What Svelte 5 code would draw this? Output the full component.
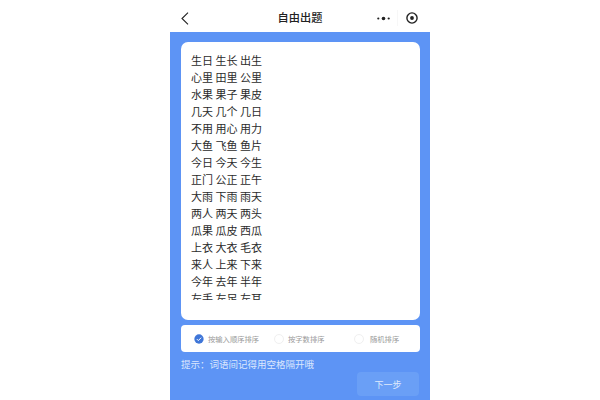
<script>
  const lines = [
    '生日 生长 出生', '心里 田里 公里', '水果 果子 果皮', '几天 几个 几日', '不用 用心 用力',
    '大鱼 飞鱼 鱼片', '今日 今天 今生', '正门 公正 正午', '大雨 下雨 雨天', '两人 两天 两头',
    '瓜果 瓜皮 西瓜', '上衣 大衣 毛衣', '来人 上来 下来', '今年 去年 半年', '左手 左足 左耳'
  ];
  const options = [
    { label: '按输入顺序排序', checked: true },
    { label: '按字数排序', checked: false },
    { label: '随机排序', checked: false }
  ];
</script>

<div class="page">
  <div class="phone">
    <header class="topbar">
      <svg class="back" viewBox="0 0 8 13" fill="none" stroke="#222" stroke-width="1.1">
        <path d="M7 .7 1 6.5l6 5.8" />
      </svg>
      <div class="title">自由出题</div>
      <div class="capsule">
        <svg class="more" viewBox="0 0 13 5" fill="#222">
          <circle cx="1.3" cy="2.5" r="1.1" />
          <circle cx="6.5" cy="2.5" r="1.8" />
          <circle cx="11.7" cy="2.5" r="1.1" />
        </svg>
        <span class="divider"></span>
        <svg class="target" viewBox="0 0 12 12">
          <circle cx="6" cy="6" r="5.1" fill="none" stroke="#222" stroke-width="1.4" />
          <circle cx="6" cy="6" r="1.9" fill="#222" />
        </svg>
      </div>
    </header>

    <main class="content">
      <section class="card">
        <div class="words">
          {#each lines as line}
            <div class="line">{line}</div>
          {/each}
        </div>
      </section>

      <section class="options">
        {#each options as opt}
          <div class="option">
            {#if opt.checked}
              <svg class="radio" viewBox="0 0 12 12">
                <circle cx="6" cy="6" r="5.6" fill="#3f76d8" />
                <path d="M3.4 6.1 5.2 7.9 8.6 4.4" fill="none" stroke="#fff" stroke-width="1.2" />
              </svg>
            {:else}
              <span class="radio empty"></span>
            {/if}
            <span class="label">{opt.label}</span>
          </div>
        {/each}
      </section>

      <div class="hint">提示：词语间记得用空格隔开哦</div>

      <div class="actions">
        <button class="next">下一步</button>
      </div>
    </main>
  </div>
</div>

<style>
  :global(body) {
    margin: 0;
    background: #fff;
  }

  .page {
    width: 600px;
    height: 400px;
    display: flex;
    justify-content: center;
    overflow: hidden;
    font-family: "Noto Sans CJK SC", "Liberation Sans", sans-serif;
  }

  .phone {
    width: 260px;
    height: 400px;
    display: flex;
    flex-direction: column;
  }

  .topbar {
    height: 32px;
    flex: none;
    box-sizing: border-box;
    display: flex;
    align-items: center;
    justify-content: space-between;
    padding: 4px 12px 0 11px;
    background: #fff;
    position: relative;
  }

  .back {
    width: 8px;
    height: 13px;
  }

  .title {
    position: absolute;
    left: 0;
    right: 0;
    top: 0;
    line-height: 35px;
    text-align: center;
    font-size: 11.2px;
    font-weight: 500;
    color: #222;
    pointer-events: none;
  }

  .capsule {
    display: flex;
    align-items: center;
    gap: 7px;
  }

  .more {
    width: 13px;
    height: 5px;
  }

  .divider {
    width: 1px;
    height: 16px;
    background: #f7f7f7;
  }

  .target {
    width: 12px;
    height: 12px;
    margin-left: 1px;
  }

  .content {
    flex: 1;
    background: #5d94f5;
    padding: 10px 10px 0 11px;
    display: flex;
    flex-direction: column;
  }

  .card {
    height: 278px;
    flex: none;
    box-sizing: border-box;
    background: #fff;
    border-radius: 7px;
    padding: 10px 10px 0;
  }

  .words {
    height: 248px;
    overflow: hidden;
  }

  .line {
    height: 17px;
    line-height: 17.6px;
    font-size: 11px;
    color: #2b2b2b;
    white-space: pre;
  }

  .options {
    height: 27px;
    flex: none;
    margin-top: 5px;
    background: #fff;
    border-radius: 4px;
    display: flex;
    align-items: center;
    padding: 0 13px;
  }

  .option {
    display: flex;
    align-items: center;
    gap: 4px;
  }

  .option:nth-child(1) {
    width: 80px;
  }

  .option:nth-child(2) {
    width: 80px;
  }

  .option:nth-child(3) {
    gap: 6px;
  }

  .radio {
    width: 10px;
    height: 10px;
    flex: none;
  }

  .radio.empty {
    box-sizing: border-box;
    border: 1px solid #f0f0f0;
    border-radius: 50%;
  }

  .label {
    font-size: 7.3px;
    color: #9a9a9a;
    white-space: nowrap;
  }

  .hint {
    margin-top: 5px;
    line-height: 14px;
    font-size: 9.5px;
    color: #dbe7fd;
  }

  .actions {
    display: flex;
    justify-content: flex-end;
    margin-top: 1px;
    margin-right: 1px;
  }

  .next {
    width: 62px;
    height: 24px;
    border: none;
    border-radius: 4px;
    background: #6a9ff6;
    color: #dfeafc;
    font-family: inherit;
    font-size: 9px;
    padding: 0;
  }
</style>
